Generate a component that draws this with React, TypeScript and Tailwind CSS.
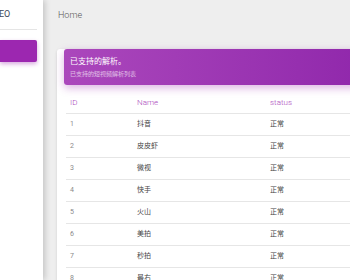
import React from "react";

const rows = [
  { id: 1, name: "抖音" },
  { id: 2, name: "皮皮虾" },
  { id: 3, name: "微视" },
  { id: 4, name: "快手" },
  { id: 5, name: "火山" },
  { id: 6, name: "美拍" },
  { id: 7, name: "秒拍" },
  { id: 8, name: "最右" },
];

export default function App() {
  return (
    <div
      className="flex w-[350px] h-[280px] overflow-hidden bg-[#eeeeee]"
      style={{ fontFamily: 'Roboto, "Noto Sans CJK SC", sans-serif' }}
    >
      <aside className="relative z-10 w-[43px] shrink-0 bg-white shadow-[2px_0_6px_rgba(0,0,0,0.18)] flex flex-col">
        <div className="h-[30px] shrink-0 mr-[6px] border-b border-[#e5e5e5] flex items-center overflow-hidden">
          <span className="text-[9px] leading-none text-[#3c4858] ml-[-1px]">EO</span>
        </div>
        <div className="shrink-0 mt-[10px] mr-[6px] h-[22px] rounded-r-[2px] bg-[#9c27b0] shadow-[0_2px_4px_rgba(156,39,176,0.4)]" />
      </aside>
      <main className="flex-1 min-w-0 flex flex-col">
        <div className="h-[31px] shrink-0 pl-[15px] flex items-center">
          <span className="text-[9px] font-light text-[#555]">Home</span>
        </div>
        <div className="shrink-0 pl-[14px] pt-[27px]">
          <div className="w-[340px] bg-white rounded-[3px] shadow-[0_1px_3px_rgba(0,0,0,0.12)]">
            <div className="mx-[7px] -mt-[9px] h-[36px] rounded-[3px] bg-gradient-to-r from-[#ab47bc] to-[#8e24aa] shadow-[0_3px_8px_rgba(156,39,176,0.35)] px-[6px] pt-[8px]">
              <div className="text-[8px] leading-[10px] text-white">已支持的解析。</div>
              <div className="mt-[3px] text-[6px] leading-[7px] text-white/65">已支持的短视频解析列表</div>
            </div>
            <div className="pl-[9px] pt-[7px]">
              <div className="flex h-[22px] items-center border-b border-[#e6e6e6] text-[8px] font-light text-[#ab47bc]">
                <div className="w-[67px] pl-[4px]">ID</div>
                <div className="w-[133px] pl-[4px]">Name</div>
                <div className="flex-1 pl-[4px]">status</div>
              </div>
              {rows.map((r) => (
                <div
                  key={r.id}
                  className="flex h-[22px] items-center border-b border-[#e6e6e6] text-[7px]"
                >
                  <div className="w-[67px] pl-[4px] text-[#8a8a8a]">{r.id}</div>
                  <div className="w-[133px] pl-[4px] text-[#444]">{r.name}</div>
                  <div className="flex-1 pl-[4px] text-[#444]">正常</div>
                </div>
              ))}
            </div>
          </div>
        </div>
      </main>
    </div>
  );
}
